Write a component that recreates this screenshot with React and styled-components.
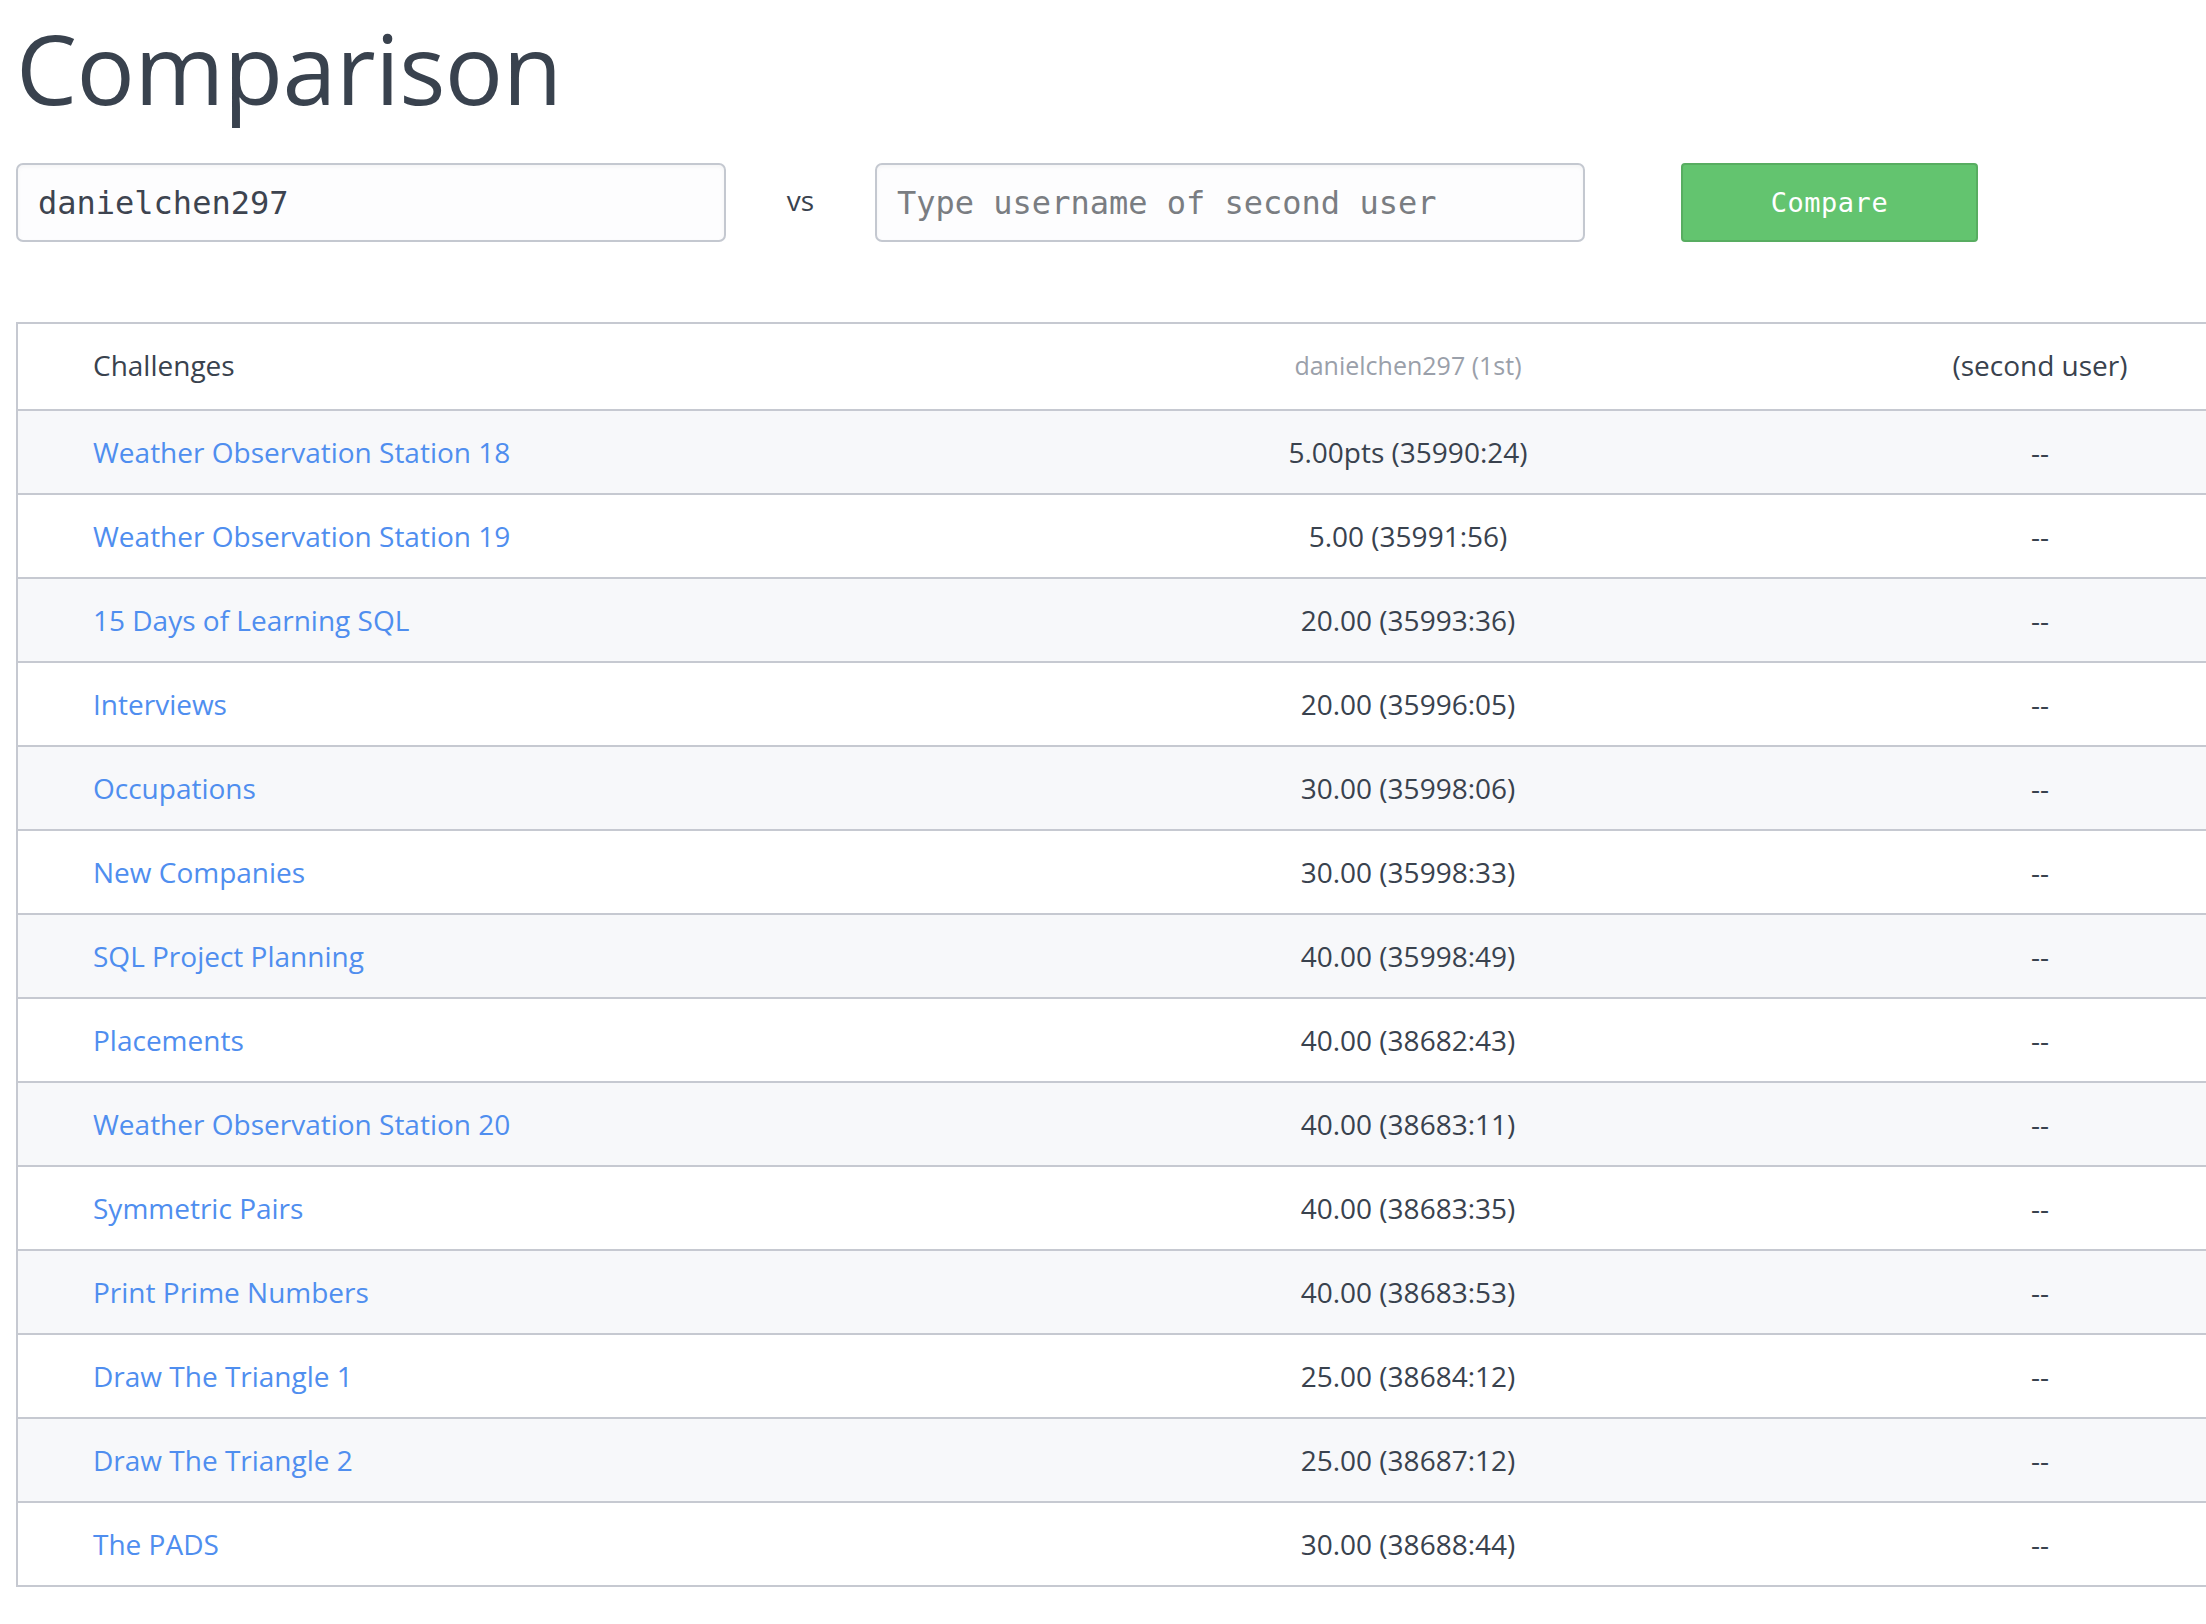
import React from "react";
import styled, { createGlobalStyle } from "styled-components";

const GlobalStyle = createGlobalStyle`
  html, body {
    margin: 0;
    padding: 0;
    background: #ffffff;
    overflow-x: hidden;
  }
  body {
    font-family: "Open Sans", "Noto Sans", sans-serif;
    color: #39424e;
  }
`;

const rows = [
  ["Weather Observation Station 18", "5.00pts (35990:24)"],
  ["Weather Observation Station 19", "5.00 (35991:56)"],
  ["15 Days of Learning SQL", "20.00 (35993:36)"],
  ["Interviews", "20.00 (35996:05)"],
  ["Occupations", "30.00 (35998:06)"],
  ["New Companies", "30.00 (35998:33)"],
  ["SQL Project Planning", "40.00 (35998:49)"],
  ["Placements", "40.00 (38682:43)"],
  ["Weather Observation Station 20", "40.00 (38683:11)"],
  ["Symmetric Pairs", "40.00 (38683:35)"],
  ["Print Prime Numbers", "40.00 (38683:53)"],
  ["Draw The Triangle 1", "25.00 (38684:12)"],
  ["Draw The Triangle 2", "25.00 (38687:12)"],
  ["The PADS", "30.00 (38688:44)"],
];

const App = () => {
  return (
    <Page>
      <GlobalStyle />
      <Title>Comparison</Title>
      <Toolbar>
        <UserInput defaultValue="danielchen297" />
        <Versus>vs</Versus>
        <UserInput placeholder="Type username of second user" />
        <CompareButton>Compare</CompareButton>
      </Toolbar>
      <Table>
        <HeadRow>
          <HeadCell>Challenges</HeadCell>
          <HeadCell $align="center" $muted>
            danielchen297 (1st)
          </HeadCell>
          <HeadCell $align="center">(second user)</HeadCell>
        </HeadRow>
        {rows.map(([name, score], i) => (
          <Row key={name} $striped={i % 2 === 0}>
            <Cell>
              <ChallengeLink href="#">{name}</ChallengeLink>
            </Cell>
            <Cell $align="center">{score}</Cell>
            <Cell $align="center">--</Cell>
          </Row>
        ))}
      </Table>
    </Page>
  );
};

const Page = styled.div`
  padding: 0 0 40px 16px;
`;

const Title = styled.h1`
  margin: 0;
  font-size: 97px;
  font-weight: 400;
  line-height: 134px;
  color: #39424e;
  letter-spacing: -0.5px;
`;

const Toolbar = styled.div`
  display: flex;
  align-items: center;
  margin-top: 29px;
  height: 79px;
`;

const UserInput = styled.input`
  box-sizing: border-box;
  width: 710px;
  height: 79px;
  padding: 0 20px;
  border: 2px solid #c4c8d0;
  border-radius: 7px;
  background: #fdfdfe;
  box-shadow: inset 0 2px 4px rgba(0, 0, 0, 0.04);
  font-family: "DejaVu Sans Mono", "Liberation Mono", monospace;
  font-size: 32px;
  color: #3d4450;
  outline: none;
  &::placeholder {
    color: #7a7d82;
  }
`;

const Versus = styled.span`
  width: 149px;
  text-align: center;
  font-size: 28px;
  color: #39424e;
  margin-top: -6px;
`;

const CompareButton = styled.button`
  box-sizing: border-box;
  margin-left: 96px;
  width: 297px;
  height: 79px;
  border: 2px solid #58ad61;
  border-radius: 4px;
  background: #63c46f;
  color: #ffffff;
  font-family: "DejaVu Sans Mono", "Liberation Mono", monospace;
  font-size: 27px;
  letter-spacing: 0.5px;
  cursor: pointer;
`;

const Table = styled.div`
  margin-top: 80px;
  width: 2220px;
  border: 2px solid #c6c9d1;
  border-right: none;
`;

const HeadRow = styled.div`
  display: grid;
  grid-template-columns: 938px 904px 360px;
  align-items: center;
  height: 85px;
  border-bottom: 2px solid #c6c9d1;
`;

const Row = styled.div`
  display: grid;
  grid-template-columns: 938px 904px 360px;
  align-items: center;
  height: 82px;
  background: ${(p) => (p.$striped ? "#f7f8fa" : "#ffffff")};
  border-bottom: 2px solid #c6c9d1;
  &:last-child {
    border-bottom: none;
  }
`;

const HeadCell = styled.div`
  padding-left: ${(p) => (p.$align === "center" ? "0" : "75px")};
  padding-bottom: 4px;
  text-align: ${(p) => p.$align || "left"};
  font-size: ${(p) => (p.$muted ? "25px" : "28px")};
  color: ${(p) => (p.$muted ? "#9aa0aa" : "#39424e")};
`;

const Cell = styled.div`
  padding-left: ${(p) => (p.$align === "center" ? "0" : "75px")};
  text-align: ${(p) => p.$align || "left"};
  font-size: 28px;
  color: #39424e;
`;

const ChallengeLink = styled.a`
  color: #4f8eef;
  text-decoration: none;
`;

export default App;
